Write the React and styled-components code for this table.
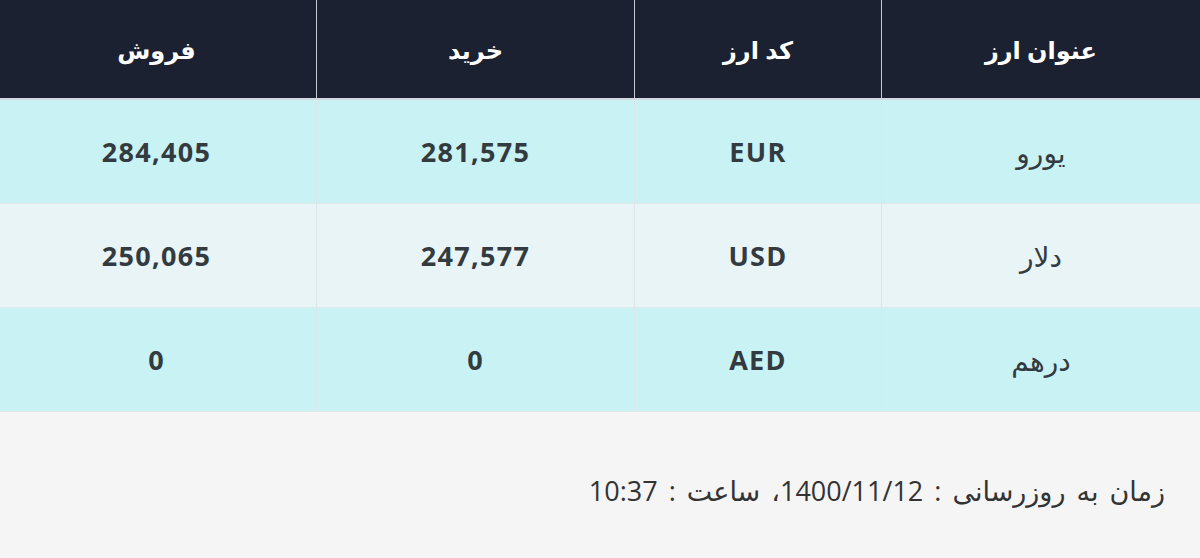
import React from 'react';
import styled, { createGlobalStyle } from 'styled-components';

const GlobalStyle = createGlobalStyle`
  html, body {
    margin: 0;
    padding: 0;
    background: #f5f5f5;
  }
  body {
    font-family: 'Open Sans', 'DejaVu Sans', sans-serif;
  }
`;

const Wrapper = styled.div`
  direction: rtl;
  width: 1200px;
  height: 558px;
  background: #f5f5f5;
  display: flex;
  flex-direction: column;
`;

const Table = styled.table`
  width: 100%;
  border-collapse: collapse;
  table-layout: fixed;
`;

const HeadCell = styled.th`
  width: ${(p) => p.width}px;
  height: 98px;
  padding: 0;
  background: #1b2131;
  color: #fff;
  font-size: 24px;
  font-weight: 700;
  text-align: center;
  border-left: 1px solid #c6cad3;
  border-bottom: 2px solid #d4d8e0;
  &:last-child {
    border-left: none;
  }
`;

const Row = styled.tr`
  background: ${(p) => (p.striped ? '#e8f4f6' : '#c9f2f4')};
`;

const Cell = styled.td`
  height: 103px;
  padding: 0;
  text-align: center;
  color: #333a40;
  font-size: ${(p) => (p.title ? '28px' : '27px')};
  font-weight: ${(p) => (p.title ? 400 : 700)};
  letter-spacing: ${(p) => (p.title ? '0' : '1.3px')};
  border-left: 1px solid #dde6ea;
  border-bottom: 1px solid #dfe7ea;
  &:last-child {
    border-left: none;
  }
`;

const Footer = styled.div`
  flex: 1;
  display: flex;
  align-items: center;
  padding: 10px 35px 0 0;
  color: #333;
  font-size: 27px;
  letter-spacing: 0.9px;
  word-spacing: 4px;
`;

const columns = [
  { label: 'عنوان ارز', width: 318 },
  { label: 'کد ارز', width: 246 },
  { label: 'خرید', width: 317 },
  { label: 'فروش', width: 319 },
];

const rates = [
  { name: 'یورو', code: 'EUR', buy: '281,575', sell: '284,405' },
  { name: 'دلار', code: 'USD', buy: '247,577', sell: '250,065' },
  { name: 'درهم', code: 'AED', buy: '0', sell: '0' },
];

const App = () => (
  <>
    <GlobalStyle />
    <Wrapper>
      <Table>
        <thead>
          <tr>
            {columns.map((c) => (
              <HeadCell key={c.label} width={c.width}>
                {c.label}
              </HeadCell>
            ))}
          </tr>
        </thead>
        <tbody>
          {rates.map((r, i) => (
            <Row key={r.code} striped={i % 2 === 1}>
              <Cell title="1">{r.name}</Cell>
              <Cell>{r.code}</Cell>
              <Cell>{r.buy}</Cell>
              <Cell>{r.sell}</Cell>
            </Row>
          ))}
        </tbody>
      </Table>
      <Footer>زمان به روزرسانی : 1400/11/12، ساعت : 10:37</Footer>
    </Wrapper>
  </>
);

export default App;
